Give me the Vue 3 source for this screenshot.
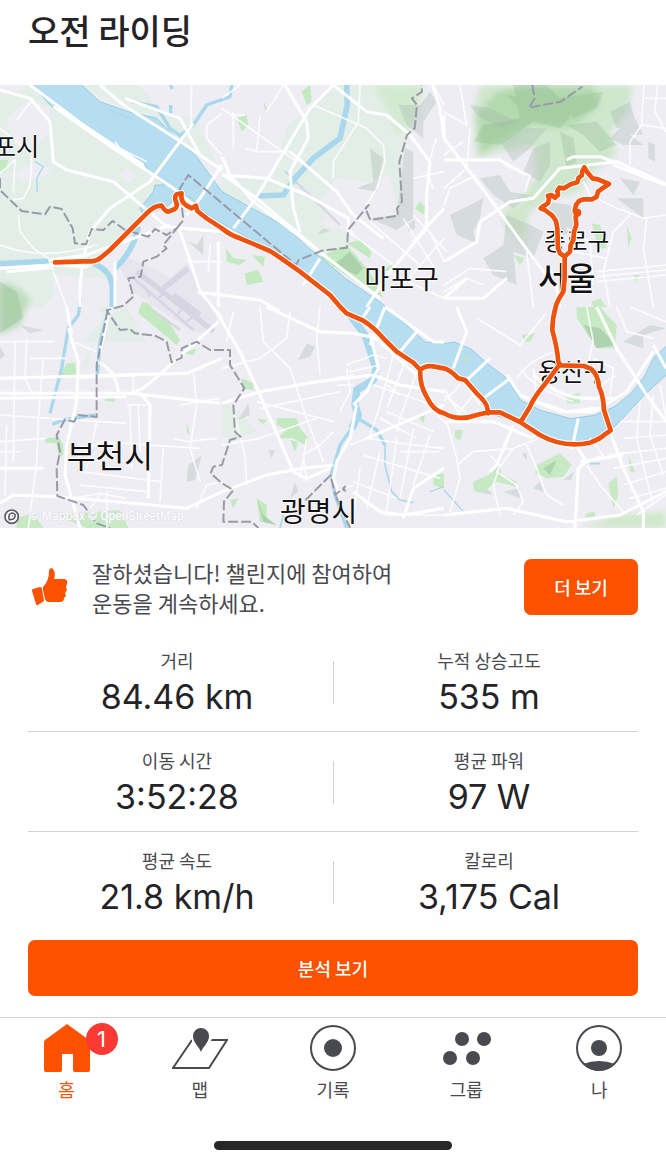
<script setup>
const stats = [
  [{ label: '거리', value: '84.46 km' }, { label: '누적 상승고도', value: '535 m' }],
  [{ label: '이동 시간', value: '3:52:28' }, { label: '평균 파워', value: '97 W' }],
  [{ label: '평균 속도', value: '21.8 km/h' }, { label: '칼로리', value: '3,175 Cal' }],
]
const tabs = [
  { id: 'home', label: '홈', badge: 1 },
  { id: 'map', label: '맵' },
  { id: 'record', label: '기록' },
  { id: 'group', label: '그룹' },
  { id: 'me', label: '나' },
]
</script>

<template>
  <div class="screen">
    <header class="head"><h1>오전 라이딩</h1></header>

    <svg class="map" viewBox="0 0 1998 1329" role="img" aria-label="라이딩 경로 지도">
      <defs>
        <filter id="soft" x="-10%" y="-10%" width="120%" height="120%"><feGaussianBlur stdDeviation="9" /></filter>
      </defs>
      <rect width="1998" height="1329" fill="#efedf4" />

      <!-- countryside -->
      <g fill="#e4eee8">
        <path d="M0 0H90L250 130 430 230 520 320 480 370 290 540H0ZM240 0H420L480 80 590 100 650 240 600 220 470 100 385 80Z" />
        <path d="M0 530H290L340 570 340 666 240 850H260L310 690 280 640 170 620 130 666H0Z" />
        <path d="M860 120 940 60 1010 0H1270L1220 170 1190 380 1120 300 1030 310 960 420 1040 440 1040 480 960 510 860 430 720 370 666 320V270L820 280Z" />
        <path d="M320 690 380 666 440 770H250Z" />
        <path d="M666 950 720 980 770 1040 720 1060 666 1060Z" />
      </g>
      <g fill="#efedf4">
        <path d="M20 100 90 40 150 70 145 150 90 190 45 175ZM30 270 120 225 155 265 75 290ZM355 270 385 245 410 275 385 292ZM150 570 330 580 335 666H180Z" />
        <path d="M1100 290 1170 270 1190 370 1110 390 1060 430 960 350 1010 280Z" />
        <path d="M0 0H90L60 20 0 25Z" />
      </g>

      <!-- mountain parkland -->
      <g filter="url(#soft)">
        <path fill="#cfe7cd" d="M1440 0H1900L1880 90 1830 140 1850 210 1780 260 1740 320 1650 340 1590 380 1570 470 1520 410 1610 270 1600 180 1500 200 1430 220 1420 90Z" />
        <path fill="#b3d9af" d="M1490 20 1600 0H1780L1800 60 1740 110 1690 130 1600 120 1500 170 1440 210 1430 90Z" />
        <path fill="#d4ead0" d="M1120 0H1270L1240 120 1190 150 1170 90Z" />
        <path fill="#bcdcb9" d="M0 590 40 600 90 640 60 720 0 750Z" />
        <path fill="#d2e8cd" d="M1510 370 1590 350 1570 410 1580 480 1510 420Z" />
        <path fill="#d0e8cb" d="M1740 1329 1850 1290 1998 1280V1329Z" />
      </g>
      <g fill="#7fae84" opacity=".25">
        <path d="M1540 0H1640L1720 80 1680 130 1600 110 1500 180 1420 170 1450 120 1560 100ZM1670 40 1810 20 1790 70 1720 100ZM1700 120 1790 110 1850 180 1800 200 1750 150ZM1520 30 1590 40 1640 90 1580 90ZM1680 140 1720 160 1730 230 1700 250Z" />
        <path d="M0 590 50 620 70 700 0 745Z" />
      </g>
      <g fill="#a4b7ac" opacity=".33">
        <path d="M1410 60 1470 70 1550 110 1500 130 1430 90ZM1500 170 1580 130 1640 130 1590 190 1540 230ZM1600 190 1650 170 1650 240 1620 290 1570 260ZM1440 280 1500 270 1530 320 1590 330 1540 370 1480 330ZM1350 390 1400 365 1450 340 1440 400 1420 440 1430 475 1370 450ZM1520 390 1590 420 1630 440 1600 520 1540 500 1550 600 1480 570 1450 520 1510 480ZM1640 350 1710 360 1740 430 1690 450 1660 400ZM1830 160 1900 90 1930 150 1890 150 1930 180 1870 180ZM1850 340 1930 340 1930 400ZM1860 280 1920 290 1900 330ZM1945 170 1965 180 1965 230 1945 220ZM1830 80 1890 50 1910 120 1850 130Z" />
        <path d="M1110 190 1150 220 1130 320 1070 310 1120 290ZM1215 190 1240 200 1240 400 1190 435 1110 400 1190 390ZM1195 60 1260 60 1290 20 1310 50 1270 110 1270 160 1220 120ZM1225 415 1245 405 1245 430 1225 440ZM950 450 970 430 990 437ZM565 470 590 480 610 450 610 510Z" />
        <path d="M895 825 920 775 945 785 930 815ZM560 1190 565 1140 605 1110 585 1185ZM715 1005 745 955 750 990ZM870 1240 885 1190 895 1220ZM805 1095 825 1095 815 1120ZM0 785 15 810 0 825ZM60 720 130 735 90 745ZM1870 770 1950 720 1998 730 1930 750 1930 790ZM1425 1220 1450 1200 1480 1230ZM1510 1220 1560 1210 1560 1240ZM1600 1210 1620 1190 1630 1220ZM1690 1185 1720 1160 1715 1185ZM1565 1105 1580 1105 1580 1125Z" />
      </g>
      <g fill="#c2e9bf">
        <path d="M710 100 740 90 745 120 725 140ZM905 20 930 0 935 50 920 60ZM790 50 802 70 795 75ZM0 225 25 225 15 260 0 260ZM550 345 570 320 620 365 600 375ZM678 490 700 520 740 525 720 540 680 530ZM735 565 775 555 790 590 740 600ZM755 510 795 515 790 545ZM570 590 585 600 575 620Z" />
        <path d="M960 515 1040 480 1110 560 1150 640 1050 580ZM1040 475 1080 465 1115 500 1110 520ZM1245 370 1260 350 1275 365 1270 390ZM1150 555 1190 530 1185 560ZM425 650 445 655 475 690 500 700 540 765 530 780 415 685ZM550 805 590 790 580 810ZM180 870 200 835 225 835 232 870ZM315 938 345 936 345 950 315 948ZM135 1060 175 1055 190 1080 190 1110 175 1115 170 1075 135 1072ZM560 1010 570 1050 560 1040ZM725 880 760 895 760 915 730 910ZM830 1000 890 1000 900 1030 925 1060 915 1080 880 1060 830 1060 860 1035 830 1020ZM870 1065 895 1070 885 1100ZM770 1000 800 1005 790 1020ZM770 1240 800 1260 800 1300 830 1320 780 1310ZM690 1245 715 1240 700 1270ZM1255 995 1275 990 1270 1015ZM1300 1170 1332 1165V1210L1300 1200ZM1090 750 1110 770 1110 810ZM1170 760 1205 770 1200 780Z" />
        <path d="M1565 750 1605 745 1590 770 1575 770ZM1700 930 1740 925 1740 955 1700 955ZM1365 1035 1390 1035 1380 1065 1365 1060ZM1420 1190 1465 1170 1500 1140 1505 1170 1550 1190 1545 1205 1490 1190 1450 1220 1420 1215ZM1610 1140 1680 1105 1715 1140 1690 1175 1640 1180 1605 1165ZM1825 1195 1850 1175 1855 1230 1840 1270ZM1885 1110 1905 1160 1890 1160ZM1760 1285 1785 1280 1785 1300 1755 1300ZM1730 666H1800L1850 720 1845 790 1790 790 1730 700ZM1775 415 1800 420 1820 490 1795 490ZM1540 510 1575 520 1560 540ZM1880 420 1895 460 1885 490ZM1900 570 1920 570 1905 590ZM1775 650 1800 640 1820 666 1780 666ZM50 1300 100 1285 130 1329H50ZM170 1290 360 1275 385 1329H260Z" opacity=".9" />
      </g>
      <g fill="#85a986" opacity=".35">
        <path d="M1000 540 1050 500 1090 550 1070 570ZM1750 720 1800 730 1850 780 1790 790ZM1630 1150 1670 1125 1650 1170ZM771 1240 790 1290 830 1320 790 1310Z" />
      </g>

      <!-- airfield -->
      <path fill="#e7e5ee" d="M375 515 450 545 510 580 560 535 600 610 650 700 640 745 580 740 400 620 360 550Z" />
      <g fill="none" stroke="#d6d5e2">
        <path stroke-width="16" d="M410 560 640 738M490 610 565 550M520 630 600 690" />
        <path stroke-width="7" d="M395 575 580 735M430 600 450 635M470 645 490 625M530 690 550 668M465 680 540 735M560 710 585 690M855 258 1020 420" />
      </g>

      <!-- water -->
      <path fill="#b7def0" stroke="#94cde4" stroke-width="3" d="M90 -5 160 70 250 130 350 190 430 230 450 265 495 300 465 300 460 320 420 370 430 390 500 365 540 330 575 340 610 380 666 415 810 495 910 565 1010 640 1050 690 1110 720 1190 800 1270 850 1332 850 1392 880 1430 925 1462 965 1465 985 1562 1012 1640 1065 1700 1083 1780 1070 1832 1036 1872 996 1932 931 2003 866V780L1962 816 1932 876 1892 926 1842 966 1782 991 1712 1001 1622 976 1562 946 1522 881 1462 836 1412 791 1362 771 1332 776 1276 771 1226 726 1156 666 1146 655 1036 580 966 520 926 490 866 430 756 370 666 320 590 215 520 150 470 100 385 80 300 50 240 -5Z" />
      <g fill="none" stroke="#a9d8ec" stroke-linejoin="round">
        <path stroke-width="17" d="M0 536 160 528 290 528 330 490M280 535Q335 555 337 610V666M345 550Q400 500 415 425M1040 0 1042 60 1020 160 940 220 880 285 850 330 770 333" />
        <path stroke-width="10" d="M395 50 470 65 510 130 540 152 580 120 620 60 690 35 695 0M511 0 517 12M512 60 512 85M242 640 235 690 205 730 185 850 150 985M157 1018 190 1005 285 990M325 676 300 770 292 870" />
        <path stroke-width="22" d="M1050 690 1095 750 1128 850 1120 885 1070 915 1065 960 1075 990 1055 1030" />
        <path stroke-width="10" d="M1055 1030 1020 1080 995 1165 1005 1230 1040 1329M1065 995 1130 1035 1155 1080" />
        <path stroke-width="5" d="M1155 1080V1140L1175 1220 1200 1245 1240 1253M1770 1136 1800 1136M840 1329 850 1290" />
        <path stroke-width="4" d="M330 75 400 103M1332 1215 1390 1280M1290 1220 1332 1205M106 230 130 245 110 280 112 320" />
      </g>
      <g fill="#bfe5c9"><path d="M1390 810 1410 818 1400 830 1388 820ZM470 222 490 235 480 242Z" /></g>

      <!-- minor streets -->
      <g fill="none" stroke="#fff" stroke-width="5" stroke-linejoin="round" opacity=".85">
        <path d="M0 130 100 210 90 225M100 40 50 105M55 390 60 440 100 490 145 520 200 666M0 480Q130 530 290 480M0 265 45 225 40 320M95 225 90 300 70 340 35 345M345 170 360 190 440 230M575 0 572 130M666 85 620 120 620 160 666 210M630 480 625 560M560 530H666M666 625H590" />
        <path d="M666 70 890 230M666 40 720 0M700 80 700 190M735 90H700M735 190 775 200H870M780 95 770 200M940 60 1100 130 1150 180 1155 230 1130 310 1100 360M1080 0 1075 110 1000 230 1000 280M850 0 800 80M1240 280 1332 260M1240 390 1340 500M1210 400 1310 560M1290 440 1332 530M1060 450 1180 540M1110 410 1260 540M1160 560 1332 640M1332 460 1200 610M1310 160Q1270 260 1300 310M1300 0 1332 60" />
        <path d="M1332 80 1400 120 1380 0M1410 130 1400 250 1332 310M1390 170 1332 210M1510 240 1590 270 1575 320M1932 0 1925 120 1890 170 1890 240M1925 120 1998 130M1932 40H1998M1972 0 1965 80 1998 140M1750 290 1770 330 1850 370 1930 400 1998 390M1890 390 1840 440 1810 560 1830 666M1700 430 1770 470 1780 600M1720 500 1820 520M1790 560 1998 540M1790 575 1998 555M1790 590 1998 570M1940 400 1930 490 1960 666M1332 620 1400 580 1450 600M1520 560 1410 550 1332 600M1580 500 1600 666M1640 540 1670 580M1332 360 1350 310 1430 270" />
        <path d="M0 770H160M45 770 40 1130M90 820H200M80 760 75 880 100 930M130 820 115 1000 110 1130 85 1329M0 990 380 1015M0 1070 140 1060M0 1100H60M20 1020 15 1230M220 770 290 800M400 860V920M230 880 440 870M290 1010 260 1150M230 1120 300 1070 600 1090M390 960 395 1150M415 960 420 1100M440 960H380M240 1160 480 1190M240 1200 440 1220M490 1090 480 1250M520 1060 560 1070 650 1060M540 960 660 940M580 860 590 960 570 1090 600 1190M590 1270 620 1200 666 1190M300 1230 270 1270M320 1220V1329M220 1240 300 1225 380 1240" />
        <path d="M666 850 780 820 860 760 870 680M780 666 790 770 870 850 920 1000 970 1130M700 680 680 770M960 666 950 760 960 870M780 970 1020 920M770 950 1000 1010M1020 980 1050 920 1040 850M1040 840 1120 810 1160 820M1050 860 1140 840M1000 880 1060 870M1010 900 1060 900M1000 1040 960 1080 910 1110 920 1190M666 1080 780 1060 950 1000M700 980 735 1110 740 1200M920 1060 900 1180M1180 810 1140 960 1110 1050M1220 820 1160 970M1250 860 1200 1000 1190 1040M1160 980 1300 1040M1140 1000 1250 1060M1100 1060 1240 1080 1332 1090M1090 1110 1320 1180M1060 1190 1190 1240M1080 1150 1060 1300M1140 1100 1100 1270M1190 1060 1160 1280M1240 1030 1200 1240M1290 1050 1240 1200M1050 1080 1100 1060M1270 950 1332 1010M1120 900 1300 960M1090 1250 1160 1290 1332 1290M1060 1200 1010 1220M1160 900 1200 930M1200 1100 1320 1100" />
        <path d="M1332 930 1400 985M1380 900 1332 950M1420 930 1370 990M1390 890 1440 960M1440 970 1400 1000M1332 910 1380 990M1430 700 1480 730 1560 780M1560 780Q1620 710 1640 680M1550 880Q1580 830 1660 800M1600 850 1610 940M1570 860Q1600 910 1720 950M1760 666 1780 770 1760 850M1780 820 1840 850 1830 930M1850 870 1790 910M1340 1010 1370 1120 1380 1180 1350 1280M1370 1140 1420 1100 1540 1090 1620 1060M1470 1110 1500 1140 1480 1200 1500 1290M1540 1090 1490 1160 1550 1200 1570 1250 1540 1290M1580 1080 1610 1150 1640 1230 1690 1260M1760 1140 1800 1200 1870 1280M1820 1110 1998 1090M1840 1150 1998 1120M1870 1200 1998 1160M1890 1240 1998 1210M1910 1290 1998 1230M1920 950 1910 1060 1940 1180 1960 1260M1960 930 1950 1050 1990 1170M1870 1060 1998 1050M1860 1010 1998 1010M1980 900 1998 1000M1770 1060 1810 1110 1740 1140M1850 666 1880 740 1960 760M1890 666 1998 710" />
      </g>

      <!-- main roads -->
      <g fill="none" stroke="#fff" stroke-width="9" stroke-linejoin="round">
        <path d="M0 15 90 40 150 110 160 230 200 255 340 290 500 425 666 440M300 0 370 60 520 155 666 255M160 65 340 190 520 310 600 375M90 0 250 120 430 240M375 40 540 100 600 210M666 240 600 340 560 390M580 115 450 290 330 370 270 440 250 520 240 600 240 666M150 525 260 510 400 460 510 420M0 550 150 540 260 545 340 480M345 530V666M535 425 575 540 600 620 666 700M655 470V666M20 560 150 548" />
        <path d="M1000 0 930 70 810 270 760 350 700 430M666 270 800 280 920 330 1045 400V450M855 0 920 110 925 160 870 260 880 370 900 440M666 215 690 270 760 350 920 470 1140 640M1000 0 1100 80 1160 90 1230 150 1290 230 1280 330 1280 430 1170 560 1100 666M670 270 770 340 960 500M870 200 1010 320 1060 390 1150 460M1298 0 1320 70 1332 160M960 520 910 600M1332 370 1240 470M600 622 780 645 840 680M1045 430 1060 450" />
        <path d="M1332 160 1440 300 1600 520 1670 610 1680 666M1332 530 1430 470 1440 410 1530 350 1600 340 1680 250 1850 230 1998 297M1332 225 1500 225 1580 270M1700 225 1720 215 1800 215 1840 230M1840 240 1998 300M1332 160V90M1332 640 1450 640 1520 580M1332 640 1400 580" />
        <path d="M205 730 235 830 230 950 200 1080 195 1170 240 1329M200 666 215 750M0 880 560 865 666 820M0 925 390 925 660 955M0 940 380 935M655 710 500 850 430 910 390 925M330 666 300 800M290 830Q345 850 355 920M0 1255 40 1230 180 1235M420 925 450 960 445 1240M170 1235 400 1255 560 1270 666 1220M0 1150H130" />
        <path d="M650 680 720 800 780 930 850 1090 880 1160 920 1180 990 1150M666 955 780 920 950 890 1120 870M1120 870 1200 900 1332 920M800 666 960 740 1060 745 1110 755M1070 960 1050 1060 1010 1130 1000 1180 1020 1230M1110 745 1135 850 1100 920 1060 960M666 1220 800 1170 910 1150 1000 1140M1060 1220 1140 1280 1210 1290 1332 1270M1210 1300 1240 1210 1332 1150M1100 1060 1332 960M1110 745 1250 870M1110 666 1080 710M1155 666 1110 780M1156 666 1300 770 1332 772M1250 740 1200 800" />
        <path d="M1370 666 1400 740 1360 850M1470 820 1390 895M1530 880 1450 940M1735 1000 1720 1070 1760 1130 1735 1150 1725 1329M1520 870 1560 930 1680 980 1780 980 1880 920 1960 800M1790 666 1850 790 1940 930 1998 1010M1830 1040 1870 1150 1930 1280V1329M1960 780 1998 850M1332 1010 1480 1010 1600 1060M1600 1050 1720 1090M1540 1020 1490 1140 1470 1160M1332 1290 1520 1270 1700 1310 1860 1290 1998 1220M1740 1130 1870 1110M1600 870Q1680 940 1760 940L1840 940M1580 940 1700 980 1790 970" />
      </g>

      <!-- district borders -->
      <g fill="none" stroke="#999aa8" stroke-width="6" stroke-dasharray="30 9" stroke-linejoin="round">
        <path d="M0 280V315L65 378 135 388 150 365 185 372 218 430 225 475 258 478 275 432 310 435 338 408 375 435 445 455 465 432 500 450 530 430 490 480 500 490 470 515 430 530 422 575 385 580 400 635 370 662 320 676 360 735 390 732 405 745 465 752 500 770 515 832 545 818V790L590 770 630 795H690V840L733 910 700 960 705 1040 722 1055 690 1065 666 1140 640 1145 632 1165 666 1195 700 1215 672 1250 670 1310 755 1310 775 1329" />
        <path d="M323 676 290 840V996L235 990 222 1010 195 1003 170 1050 180 1100 170 1150 172 1233 250 1260 290 1315 330 1329M530 430 550 405 540 310 565 270 666 355 888 540 896 525 966 497 1041 488 1044 435 1106 360 1096 370 1111 405 1194 392 1191 370 1206 350 1198 230 1221 150 1244 130 1251 60 1236 40 1266 20 1264 0M1597 0 1604 40 1587 68 1682 50 1747 5M916 1246 991 1171 1006 1230 1035 1205 1030 1215 1046 1220M1008 1235 1050 1329" />
      </g>

      <!-- place names -->
      <g class="places">
        <text x="-22" y="213" font-size="76">포시</text>
        <text x="1093" y="612" font-size="81">마포구</text>
        <text x="200" y="1148" font-size="94">부천시</text>
        <text x="840" y="1311" font-size="84">광명시</text>
        <text x="1632" y="495" font-size="71">종로구</text>
        <text x="1614" y="614" font-size="94" font-weight="500">서울</text>
        <text x="1614" y="888" font-size="75">용산구</text>
      </g>

      <!-- recorded track -->
      <g class="track">
        <path v-for="pass in ['casing', 'line']" :key="pass" :class="pass" d="M165 532 250 529 275 529Q292 528 305 516L330 495 440 385Q465 360 485 362 496 380 505 380L525 372Q534 365 528 350 522 335 530 328L545 325Q540 348 560 362L575 370 588 362 592 378 620 400 666 430Q690 450 720 460L810 498Q830 510 900 560L990 630 1021 666 1040 685 1090 707Q1120 725 1150 760L1190 800 1240 833 1261 855Q1275 840 1300 844L1332 850Q1350 855 1375 880L1395 885 1430 925Q1462 955 1462 970L1465 985M1261 855Q1258 900 1280 935 1300 978 1332 985 1375 1010 1430 990L1465 982 1500 982 1562 1012 1620 1050Q1690 1090 1770 1073 1800 1062 1812 1050L1832 1036 1812 976Q1810 930 1797 906 1795 870 1772 851L1752 843 1682 841 1675 830Q1672 790 1657 736 1657 700 1667 666 1670 650 1690 620L1694 580V515L1680 505 1674 490 1672 430 1668 408 1657 392 1635 375 1622 370 1632 362 1644 355 1647 342 1644 332 1654 330 1665 338 1674 330 1672 318 1678 308 1692 310 1712 298 1732 292 1736 278 1745 272 1747 258 1753 247 1762 262 1777 280 1794 283 1827 297 1810 308 1794 320 1790 335 1777 343 1752 343 1737 348 1728 360 1724 378 1734 385 1727 395 1729 420 1722 440 1720 465 1712 480 1710 500 1694 515M1677 841 1632 901Q1600 940 1590 965L1562 1011" />
      </g>
      <circle class="dot" cx="1732" cy="383" r="12" />

      <!-- attribution -->
      <circle cx="35" cy="1295" r="20" fill="#fff" stroke="#5b5d66" stroke-width="5" />
      <path d="M28 1304Q23 1287 36 1284 47 1285 45 1294 43 1304 28 1304ZM35 1293H38" fill="none" stroke="#5b5d66" stroke-width="5" />
      <text class="credit" x="88" y="1305">© Mapbox © OpenStreetMap</text>
    </svg>

    <section class="cheer">
      <svg class="thumb" viewBox="0 0 36 40" aria-hidden="true">
        <path d="M1 22 8 20Q10 20 10 22L12 34 6 38Q5 39 4 37L0 24Q0 22 1 22Z" />
        <path d="M11 20Q17 14 17 4 18-1 21 2 24 6 22 12L33 12Q36 13 35 17L34 20 35 23 33 26 34 29 32 31Q32 35 28 35H16Q14 35 13 32L11 23Z" />
      </svg>
      <p>잘하셨습니다! 챌린지에 참여하여<br>운동을 계속하세요.</p>
      <button type="button" class="btn more">더 보기</button>
    </section>

    <dl class="stats">
      <div v-for="(row, r) in stats" :key="r" class="row">
        <div v-for="s in row" :key="s.label" class="stat">
          <dt>{{ s.label }}</dt>
          <dd>{{ s.value }}</dd>
        </div>
      </div>
    </dl>

    <div class="action"><button type="button" class="btn wide">분석 보기</button></div>

    <nav class="tabs">
      <a v-for="t in tabs" :key="t.id" href="#" :class="{ active: t.id === 'home' }">
        <span class="icon">
          <svg v-if="t.id === 'home'" viewBox="0 0 56 50"><path fill="currentColor" d="M28 1 50 17Q51 18 51 19V47Q51 49 49 49H36Q34 49 34 47V31H23V47Q23 49 21 49H7Q5 49 5 47V19Q5 18 6 17Z" /></svg>
          <svg v-else-if="t.id === 'map'" viewBox="0 0 56 50">
            <path fill="none" stroke="currentColor" stroke-width="2" d="M20 17 1 45H37L55 17H39" />
            <path fill="#fff" d="M29 33 20 22V4H40V16Z" />
            <path fill="currentColor" d="M29 29C27 23 21 20 21 13A8 8 0 0 1 37 13C37 20 31 23 29 29Z" />
          </svg>
          <svg v-else-if="t.id === 'record'" viewBox="0 0 56 50"><circle cx="28" cy="25" r="22" fill="none" stroke="currentColor" stroke-width="2" /><circle cx="28" cy="25" r="9" fill="currentColor" /></svg>
          <svg v-else-if="t.id === 'group'" viewBox="0 0 56 50" fill="currentColor"><circle cx="24" cy="16" r="7" /><circle cx="46" cy="16" r="7" /><circle cx="12" cy="35" r="7" /><circle cx="35" cy="35" r="7" /></svg>
          <svg v-else viewBox="0 0 56 50"><circle cx="28" cy="25" r="22" fill="none" stroke="currentColor" stroke-width="2" /><circle cx="28" cy="25" r="8" fill="currentColor" /><path fill="currentColor" d="M12 41Q28 35 44 41 37 48 28 48 19 48 12 41Z" /></svg>
          <b v-if="t.badge" class="badge">{{ t.badge }}</b>
        </span>
        <span>{{ t.label }}</span>
      </a>
    </nav>
    <div class="indicator"></div>
  </div>
</template>

<style>
body { background: #fff; }
</style>

<style scoped>
.screen {
  font-family: "Liberation Sans", "Noto Sans CJK KR", sans-serif;
  color: #242428;
  overflow: hidden;
}
.head { padding: 6px 28px 31px; }
h1 {
  margin: 0;
  font: 500 34px/48px "Noto Sans CJK KR", sans-serif;
}
.map { display: block; width: 100%; height: auto; }
.places {
  font-family: "Noto Sans CJK KR", sans-serif;
  fill: #111;
  stroke: #fff;
  stroke-width: 5px;
  stroke-linejoin: round;
  paint-order: stroke;
}
.track { fill: none; stroke-linecap: round; stroke-linejoin: round; }
.casing { stroke: #fff; stroke-width: 20px; }
.line { stroke: #ee520f; stroke-width: 14px; }
.dot { fill: #ee520f; }
.credit {
  font: 36px Roboto, sans-serif;
  fill: #fff;
  stroke: #dddde5;
  stroke-width: 3px;
  paint-order: stroke;
}
.cheer {
  display: flex;
  align-items: center;
  padding: 29px 28px 15px;
}
.thumb { flex: none; width: 36px; height: 40px; margin: 0 24px 0 4px; fill: #fc5200; }
.cheer p {
  flex: 1;
  margin: 0;
  font: 22px/30px "Noto Sans CJK KR", sans-serif;
  color: #494950;
}
.btn {
  border: 0;
  border-radius: 7px;
  background: #fc5200;
  color: #fff;
  font: 500 18px/24px "Noto Sans CJK KR", sans-serif;
  padding: 16px 28px;
}
.more { min-width: 114px; }
.stats { margin: 0; padding: 0 28px; }
.row {
  position: relative;
  display: grid;
  grid-template-columns: 1fr 1fr;
  column-gap: 14px;
  padding: 2px 0 12px;
  text-align: center;
}
.row + .row { border-top: 1px solid #d2d2d6; }
.row::after {
  content: "";
  position: absolute;
  left: 50%;
  top: 29px;
  bottom: 27px;
  width: 1px;
  background: #d2d2d6;
}
dt { font: 18px/29px "Noto Sans CJK KR", sans-serif; color: #494950; padding-top: 12px; }
dd { margin: 0; font: 34px/44px Inter, sans-serif; }
.action { padding: 9px 28px 21px; }
.wide { display: block; width: 100%; }
.tabs {
  display: grid;
  grid-template-columns: repeat(5, 1fr);
  border-top: 1px solid #d4d4d8;
  padding-top: 5px;
}
.tabs a {
  display: flex;
  flex-direction: column;
  align-items: center;
  color: #494950;
  text-decoration: none;
  font: 18px/32px "Noto Sans CJK KR", sans-serif;
}
.tabs .active { color: #fc5200; }
.icon { position: relative; height: 50px; }
.icon svg { display: block; width: 56px; height: 50px; }
.badge {
  position: absolute;
  right: -23px;
  top: 0;
  width: 32px;
  height: 32px;
  border-radius: 50%;
  background: #fb3a34;
  color: #fff;
  font: 22px/32px Inter, sans-serif;
  text-align: center;
}
.indicator {
  width: 238px;
  height: 9px;
  margin: 36px auto 14px;
  border-radius: 5px;
  background: #282828;
}
</style>
